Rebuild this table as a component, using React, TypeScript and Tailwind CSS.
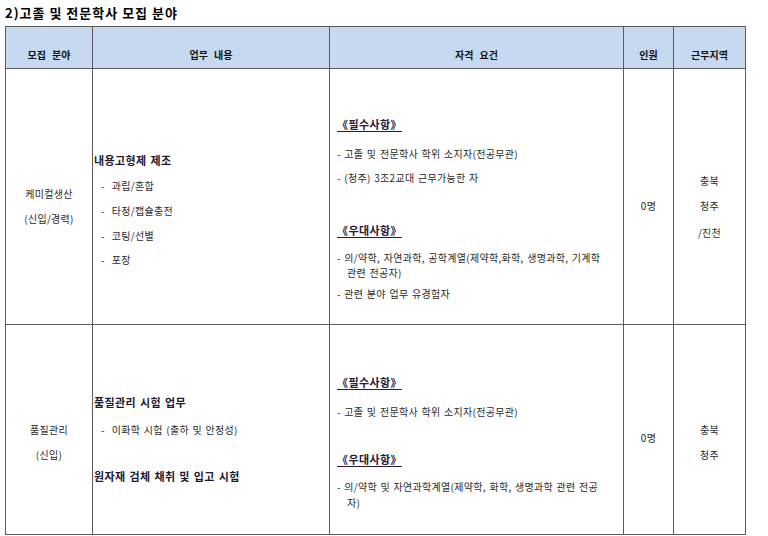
import React from "react";

const head = "border border-[#5c5c5c] bg-[#c6d9f1] align-bottom pb-[6px] text-center text-[10px] font-bold leading-[14px] text-[#111] [word-spacing:4px]";
const cell = "border border-[#5c5c5c] align-top text-[10px] leading-[14px] text-[#2a2a2a] tracking-[0.3px] [word-spacing:1px]";

function Item({ text, className = "" }: { text: string; className?: string }) {
  return (
    <p className={`pl-[7px] ${className}`}>
      -<span className="ml-[7px]">{text}</span>
    </p>
  );
}

function Bold({ text, className = "" }: { text: string; className?: string }) {
  return (
    <p className={`text-[11px] font-bold tracking-[0.4px] text-[#1c1830] ${className}`}>
      {text}
    </p>
  );
}

function Mark({ text, className = "" }: { text: string; className?: string }) {
  return (
    <p className={`text-[11px] font-bold tracking-[0.4px] text-[#2a1a38] ${className}`}>
      <span className="underline underline-offset-2">{text}</span>
    </p>
  );
}

export default function App() {
  return (
    <div className="w-[768px] h-[536px] overflow-hidden bg-white font-['Noto_Sans_CJK_KR',sans-serif]">
      {/* Title */}
      <h2 className="h-[26px] pl-[5px] text-[13px] font-bold leading-[25px] tracking-[1px] text-black">
        2)고졸 및 전문학사 모집 분야
      </h2>

      <table className="ml-[5px] table-fixed border-collapse">
        <colgroup>
          <col className="w-[87px]" />
          <col className="w-[237px]" />
          <col className="w-[294px]" />
          <col className="w-[50px]" />
          <col className="w-[72px]" />
        </colgroup>
        <thead>
          <tr>
            <th className={`${head} h-[42px]`}>모집 분야</th>
            <th className={head}>업무 내용</th>
            <th className={head}>자격 요건</th>
            <th className={head}>인원</th>
            <th className={head}>근무지역</th>
          </tr>
        </thead>
        <tbody>
          {/* Row 1 */}
          <tr>
            <td className={`${cell} h-[256px] pt-[118px] text-center`}>
              <p>케미컬생산</p>
              <p className="mt-[11px]">(신입/경력)</p>
            </td>
            <td className={`${cell} pt-[84px] pl-[1px]`}>
              <Bold text="내용고형제 제조" />
              <Item text="과립/혼합" className="mt-[12px]" />
              <Item text="타정/캡슐충전" className="mt-[11px]" />
              <Item text="코팅/선별" className="mt-[11px]" />
              <Item text="포장" className="mt-[10px]" />
            </td>
            <td className={`${cell} pt-[48px] pl-[7px] whitespace-nowrap`}>
              <Mark text="《필수사항》" />
              <p className="mt-[16px]">- 고졸 및 전문학사 학위 소지자(전공무관)</p>
              <p className="mt-[10px]">- (청주) 3조2교대 근무가능한 자</p>
              <Mark text="《우대사항》" className="mt-[38px]" />
              <p className="mt-[13px] pl-[10px] -indent-[10px] leading-[15px]">
                - 의/약학, 자연과학, 공학계열(제약학,화학, 생명과학, 기계학
                <br />
                관련 전공자)
              </p>
              <p className="mt-[7px]">- 관련 분야 업무 유경험자</p>
            </td>
            <td className={`${cell} pt-[130px] text-center`}>
              <p>0명</p>
            </td>
            <td className={`${cell} pt-[105px] text-center`}>
              <p>충북</p>
              <p className="mt-[11px]">청주</p>
              <p className="mt-[13px]">/진천</p>
            </td>
          </tr>

          {/* Row 2 */}
          <tr>
            <td className={`${cell} h-[210px] pt-[98px] text-center`}>
              <p>품질관리</p>
              <p className="mt-[11px]">(신입)</p>
            </td>
            <td className={`${cell} pt-[70px] pl-[1px]`}>
              <Bold text="품질관리 시험 업무" />
              <Item text="이화학 시험 (출하 및 안정성)" className="mt-[14px]" />
              <Bold text="원자재 검체 채취 및 입고 시험" className="mt-[32px]" />
            </td>
            <td className={`${cell} pt-[50px] pl-[7px] whitespace-nowrap`}>
              <Mark text="《필수사항》" />
              <p className="mt-[16px]">- 고졸 및 전문학사 학위 소지자(전공무관)</p>
              <Mark text="《우대사항》" className="mt-[33px]" />
              <p className="mt-[13px] pl-[10px] -indent-[10px] leading-[16px]">
                - 의/약학 및 자연과학계열(제약학, 화학, 생명과학 관련 전공
                <br />
                자)
              </p>
            </td>
            <td className={`${cell} pt-[106px] text-center`}>
              <p>0명</p>
            </td>
            <td className={`${cell} pt-[98px] text-center`}>
              <p>충북</p>
              <p className="mt-[11px]">청주</p>
            </td>
          </tr>
        </tbody>
      </table>
    </div>
  );
}
